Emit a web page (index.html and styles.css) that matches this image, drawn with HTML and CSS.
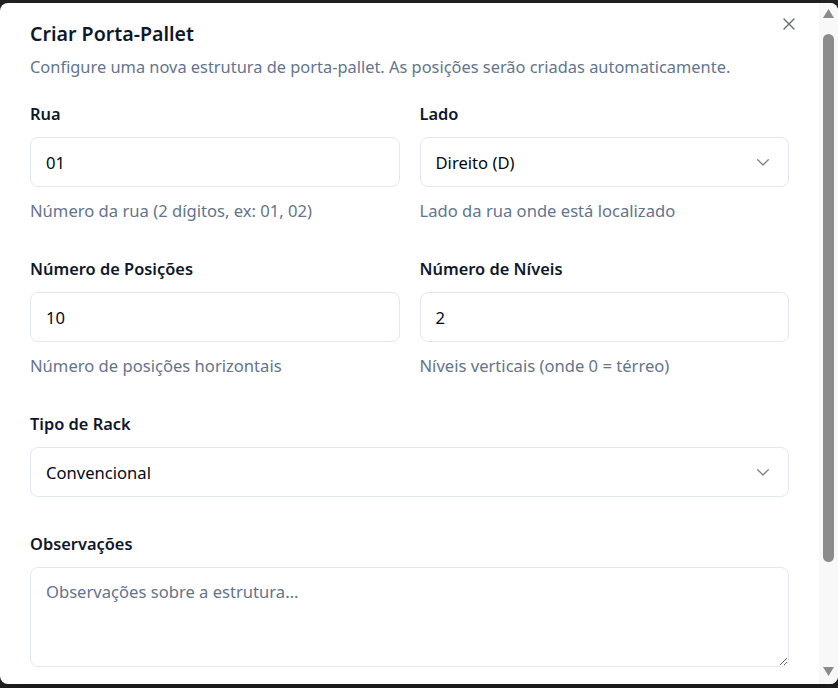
FILE: index.html
```html
<!DOCTYPE html>
<html lang="pt-BR">
<head>
<meta charset="utf-8">
<title>Criar Porta-Pallet</title>
<link rel="stylesheet" href="styles.css">
</head>
<body>
<div class="dialog" role="dialog" aria-labelledby="dlg-title">
  <div class="scroller">
    <header class="head">
      <h2 class="title" id="dlg-title">Criar Porta-Pallet</h2>
      <p class="desc">Configure uma nova estrutura de porta-pallet. As posições serão criadas automaticamente.</p>
    </header>
    <form class="form">
      <div class="field">
        <label class="label" for="rua">Rua</label>
        <input class="control" id="rua" type="text" value="01">
        <p class="hint">Número da rua (2 dígitos, ex: 01, 02)</p>
      </div>
      <div class="field">
        <label class="label">Lado</label>
        <button class="control select" type="button">
          <span>Direito (D)</span>
          <svg class="chev" width="12" height="7" viewBox="0 0 12 7" aria-hidden="true"><polyline points="0.7,0.8 6,6 11.3,0.8" fill="none" stroke="currentColor" stroke-width="1.3" stroke-linecap="round" stroke-linejoin="round"/></svg>
        </button>
        <p class="hint">Lado da rua onde está localizado</p>
      </div>
      <div class="field">
        <label class="label" for="pos">Número de Posições</label>
        <input class="control" id="pos" type="text" value="10">
        <p class="hint">Número de posições horizontais</p>
      </div>
      <div class="field">
        <label class="label" for="niv">Número de Níveis</label>
        <input class="control" id="niv" type="text" value="2">
        <p class="hint">Níveis verticais (onde 0 = térreo)</p>
      </div>
      <div class="field wide">
        <label class="label">Tipo de Rack</label>
        <button class="control select" type="button">
          <span>Convencional</span>
          <svg class="chev" width="12" height="7" viewBox="0 0 12 7" aria-hidden="true"><polyline points="0.7,0.8 6,6 11.3,0.8" fill="none" stroke="currentColor" stroke-width="1.3" stroke-linecap="round" stroke-linejoin="round"/></svg>
        </button>
      </div>
      <div class="field wide last">
        <label class="label" for="obs">Observações</label>
        <textarea class="control area" id="obs" placeholder="Observações sobre a estrutura..."></textarea>
      </div>
    </form>
  </div>
  <div class="scrollbar" aria-hidden="true">
    <div class="sb-btn up">
      <svg width="11" height="9" viewBox="0 0 11 9"><polygon points="0,9 5.5,0 11,9" fill="#8b8b8b"/></svg>
    </div>
    <div class="sb-track"><div class="sb-thumb"></div></div>
    <div class="sb-btn down">
      <svg width="11" height="9" viewBox="0 0 11 9"><polygon points="0,0 11,0 5.5,9" fill="#8b8b8b"/></svg>
    </div>
  </div>
  <button class="close" type="button" aria-label="Fechar">
    <svg width="12" height="12" viewBox="0 0 12 12" aria-hidden="true"><path d="M1 1 11 11M11 1 1 11" fill="none" stroke="currentColor" stroke-width="1.4" stroke-linecap="round"/></svg>
  </button>
</div>
</body>
</html>
```
FILE: styles.css
```css
* { box-sizing: border-box; }

html, body { height: 100%; }

body {
  margin: 0;
  padding-top: 3px;
  background: #232323;
  overflow: hidden;
  font-family: "Noto Sans", "Open Sans", sans-serif;
  color: #0f172a;
}

.dialog {
  position: relative;
  display: flex;
  width: 838px;
  height: 681px;
  background: #fff;
  border-radius: 8px;
  overflow: hidden;
  box-shadow: 0 10px 30px rgba(0, 0, 0, 0.35);
}

.scroller {
  flex: 1;
  min-width: 0;
  height: 100%;
  overflow: hidden;
  padding: 17px 30px 24px 30px;
}

/* scrollbar column */
.scrollbar {
  flex: none;
  width: 19px;
  height: 100%;
  background: #f8f8f8;
  display: flex;
  flex-direction: column;
}

.sb-btn {
  flex: none;
  display: flex;
  justify-content: center;
}

.sb-btn.up { height: 31px; padding-top: 6px; }
.sb-btn.down { height: 19px; padding-top: 2px; }

.sb-track {
  flex: 1;
  padding: 0 4px;
}

.sb-thumb {
  height: 528px;
  background: #8b8b8b;
  border-radius: 5.5px;
}

.title {
  margin: 0;
  font-size: 19.6px;
  line-height: 28px;
  font-weight: 600;
  color: #0f172a;
}

.desc {
  margin: 6px 0 0;
  font-size: 16.4px;
  line-height: 26px;
  color: #64748b;
}

.form {
  margin-top: 21px;
  display: grid;
  grid-template-columns: 1fr 1fr;
  column-gap: 20px;
  row-gap: 32px;
}

.field {
  display: flex;
  flex-direction: column;
  min-width: 0;
}

.field.wide { grid-column: 1 / -1; }
.field.last { margin-top: 2px; }

.label {
  font-size: 16.4px;
  line-height: 26px;
  font-weight: 600;
  color: #0f172a;
  margin-bottom: 10px;
}

.control {
  height: 50px;
  width: 100%;
  margin: 0;
  border: 1px solid #e2e8f0;
  border-radius: 8px;
  padding: 0 15px;
  background: #fff;
  font-family: inherit;
  font-size: 16.6px;
  color: #020817;
  outline: none;
}

.select {
  display: flex;
  align-items: center;
  justify-content: space-between;
  padding-right: 19px;
  text-align: left;
  cursor: pointer;
}

.chev { color: #808080; flex: none; }

.area {
  height: 100px;
  padding: 11px 15px;
  line-height: 26px;
  resize: vertical;
}

.area::placeholder { color: #64748b; opacity: 1; }

.hint {
  margin: 11px 0 0;
  font-size: 16.6px;
  line-height: 26px;
  color: #64748b;
}

.close {
  position: absolute;
  top: 13px;
  right: 41px;
  width: 16px;
  height: 16px;
  padding: 0;
  border: 0;
  background: transparent;
  color: #666a70;
  display: flex;
  align-items: center;
  justify-content: center;
  cursor: pointer;
}
```
